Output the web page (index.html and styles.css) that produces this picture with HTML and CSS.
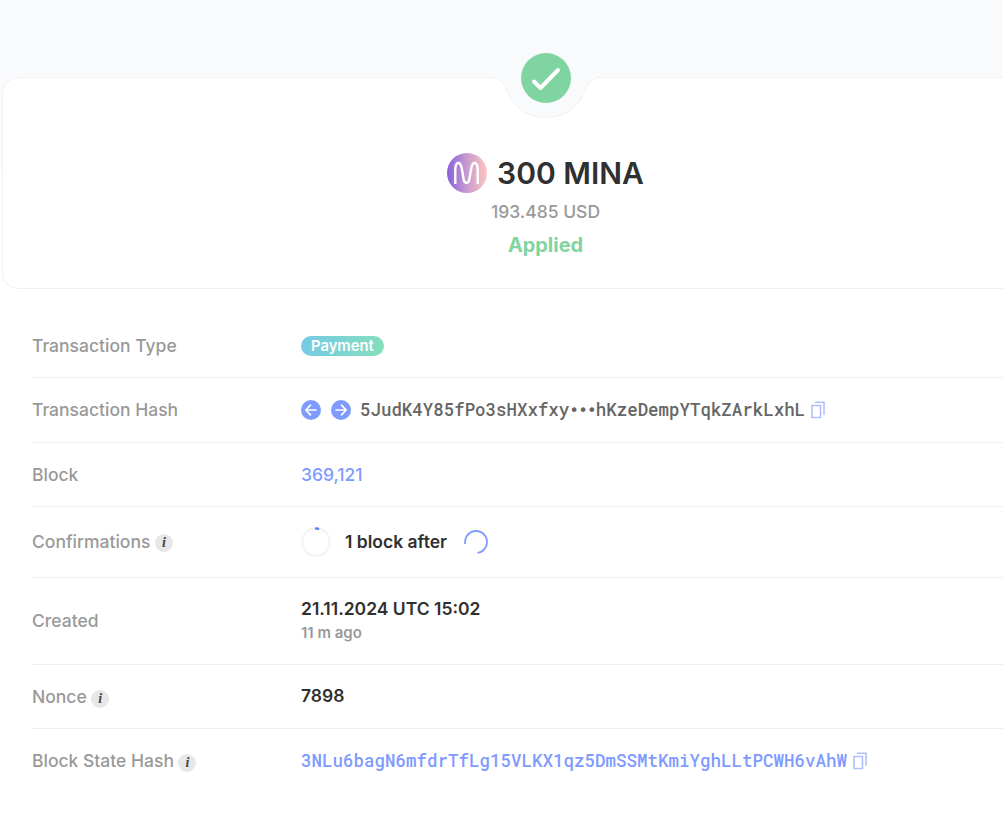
FILE: index.html
```html
<!DOCTYPE html>
<html lang="en">
<head>
<meta charset="utf-8">
<title>Transaction 300 MINA</title>
<link rel="stylesheet" href="styles.css">
</head>
<body>
<svg class="defs" width="0" height="0" aria-hidden="true">
  <symbol id="copy" viewBox="0 0 14 18"><path d="M1 4.500h8.500v12H1zM4 1.200h9v12.500" fill="none" stroke="currentColor" stroke-width="1.600"/></symbol>
</svg>
<main class="page">
  <section class="card">
    <svg class="notch" width="108" height="43" viewBox="0 0 108 43">
      <path class="notch-fill" d="M0 0V1.500C9 1.500 12 8 16 17C23 33 37 41.500 54 41.500S85 33 92 17C96 8 99 1.500 108 1.500V0z"/>
      <path class="notch-line" d="M0 1.500C9 1.500 12 8 16 17C23 33 37 41.500 54 41.500S85 33 92 17C96 8 99 1.500 108 1.500"/>
    </svg>
    <svg class="status-icon" width="50" height="50" viewBox="0 0 50 50">
      <circle cx="25" cy="25" r="25" fill="#7fd4a1"/>
      <path d="M13 28.500L19.500 35L37 17" fill="none" stroke="#fff" stroke-width="4" stroke-linecap="round" stroke-linejoin="round"/>
    </svg>
    <h1 class="amount">
      <svg width="40" height="40" viewBox="0 0 40 40">
        <defs><linearGradient id="mina"><stop offset="0" stop-color="#8760dc"/><stop offset=".5" stop-color="#c99bd0"/><stop offset="1" stop-color="#ffc5c1"/></linearGradient></defs>
        <circle cx="20" cy="20" r="20" fill="url(#mina)"/>
        <path d="M8.300 31V17C8.300 8.500 13.500 7.500 14.700 15L16.700 26.500C17.600 31 21.400 31 22.300 26.500L24.300 15C25.500 7.500 30.700 8.500 30.700 17V31" fill="none" stroke="#fff" stroke-width="2.400"/>
      </svg>
      <span>300 MINA</span>
    </h1>
    <div class="usd">193.485 USD</div>
    <div class="applied">Applied</div>
  </section>
  <dl class="details">
    <div class="row r1"><dt>Transaction Type</dt><dd><span class="badge">Payment</span></dd></div>
    <div class="row r2"><dt>Transaction Hash</dt><dd>
      <svg class="arrow" width="20" height="20" viewBox="0 0 20 20"><circle cx="10" cy="10" r="10"/><path d="M15 10H5M9.500 5.200L4.800 10L9.500 14.800"/></svg>
      <svg class="arrow" width="20" height="20" viewBox="0 0 20 20"><circle cx="10" cy="10" r="10"/><path d="M5 10H15M10.500 5.200L15.200 10L10.500 14.800"/></svg>
      <span class="hash short">5JudK4Y85fPo3sHXxfxy<span class="dots">•••</span>hKzeDempYTqkZArkLxhL</span>
      <svg class="copy" width="14" height="18"><use href="#copy"/></svg></dd></div>
    <div class="row r3"><dt>Block</dt><dd><a class="link">369,121</a></dd></div>
    <div class="row r4"><dt>Confirmations <i class="info">i</i></dt><dd>
      <svg width="30" height="30" viewBox="0 0 30 30"><circle cx="15" cy="15" r="13.700" fill="none" stroke="#f3f3f3" stroke-width="2"/><path d="M15 1.500Q16.200 1.500 17.200 1.700" fill="none" stroke="#5f83f5" stroke-width="2.400" stroke-linecap="round"/></svg>
      <span class="after strong">1 block after</span>
      <svg width="24" height="24" viewBox="0 0 24 24"><path d="M1.200 14A11 11 0 1 1 13.500 22.900" fill="none" stroke="#7f9bff" stroke-width="1.800"/></svg></dd></div>
    <div class="row r5"><dt>Created</dt><dd class="stack"><span class="strong">21.11.2024 UTC 15:02</span><small>11 m ago</small></dd></div>
    <div class="row r6"><dt>Nonce <i class="info">i</i></dt><dd class="strong">7898</dd></div>
    <div class="row r7"><dt>Block State Hash <i class="info">i</i></dt><dd><a class="hash link">3NLu6bagN6mfdrTfLg15VLKX1qz5DmSSMtKmiYghLLtPCWH6vAhW</a><svg class="copy" width="14" height="18"><use href="#copy"/></svg></dd></div>
  </dl>
</main>
</body>
</html>
```
FILE: styles.css
```css
* { box-sizing: border-box; }
body { margin: 0; background: #fff; color: #303030; font-family: Inter, sans-serif; overflow: hidden; }
.defs { position: absolute; }
.page { height: 814px; padding-top: 77px; background: linear-gradient(#f8fafc 0, #f9fafc 90px, #fff 200px); overflow: hidden; }
.card { position: relative; width: 1087px; height: 212px; margin-left: 2px; padding-top: 75px; border: 1px solid #f1f1f3; border-radius: 16px; background: #fff; display: flex; flex-direction: column; align-items: center; }
.notch { position: absolute; top: -2px; left: 489px; }
.notch-fill { fill: #f9fafc; }
.notch-line { fill: none; stroke: #f1f1f3; }
.status-icon { position: absolute; top: -25px; left: 518px; }
.amount { display: flex; align-items: center; gap: 10px; margin: 0; height: 40px; font-size: 30px; font-weight: 600; }
.usd { margin-top: 8px; line-height: 22px; font-size: 17.5px; color: #999; font-weight: 500; }
.applied { margin-top: 9px; line-height: 26px; font-size: 19.9px; font-weight: 700; color: #7fd4a1; }
.details { margin: 25px 0 0 32px; }
.row { display: flex; align-items: center; border-bottom: 1px solid #efefef; font-size: 17.5px; font-weight: 500; }
.r1 { height: 64px; }
.r2 { height: 65px; }
.r3 { height: 64px; }
.r4 { height: 71px; }
.r5 { height: 87px; }
.r6 { height: 64px; }
.r7 { height: 65px; border: 0; }
.r2 dt, .r4 dt, .r5 dt, .r7 dt { padding-bottom: 2px; }
dt { width: 269px; flex: none; display: flex; align-items: center; gap: 4.5px; color: #999; }
dd { margin: 0; display: flex; align-items: center; white-space: nowrap; }
.strong { font-weight: 600; }
.r6 dd { padding-bottom: 2px; }
.badge { height: 20px; padding: 0 10px; border-radius: 10px; background: linear-gradient(90deg, #76cae5, #84dfbd); color: #fff; font-size: 14.8px; line-height: 20px; font-weight: 600; }
.arrow { margin-right: 10px; }
.arrow circle { fill: #7f9bff; }
.arrow path { fill: none; stroke: #fff; stroke-width: 1.7; stroke-linecap: round; stroke-linejoin: round; }
.hash { padding-bottom: 2px; font: 500 17.5px/24px "Roboto Mono", "DejaVu Sans Mono", monospace; color: #666; }
.short { margin-left: -1px; padding-bottom: 0; font-size: 17.45px; }
.dots { font-family: "DejaVu Sans Mono", monospace; font-size: 16px; letter-spacing: -0.8px; }
.link, .link.hash { color: #7f9bff; }
.copy { margin-left: 5.5px; margin-bottom: 1px; color: #b1bfff; }
.after { margin: 0 17px 0 14px; padding-bottom: 2px; }
.info { width: 18px; height: 18px; margin-top: 4px; border-radius: 50%; background: #e7e7e7; color: #444; font: italic bold 14px/18px "Liberation Serif", serif; text-align: center; }
.stack { flex-direction: column; align-items: flex-start; }
.stack span { line-height: 24px; }
.stack small { font-size: 15px; line-height: 24px; color: #999; font-weight: 600; }
```
